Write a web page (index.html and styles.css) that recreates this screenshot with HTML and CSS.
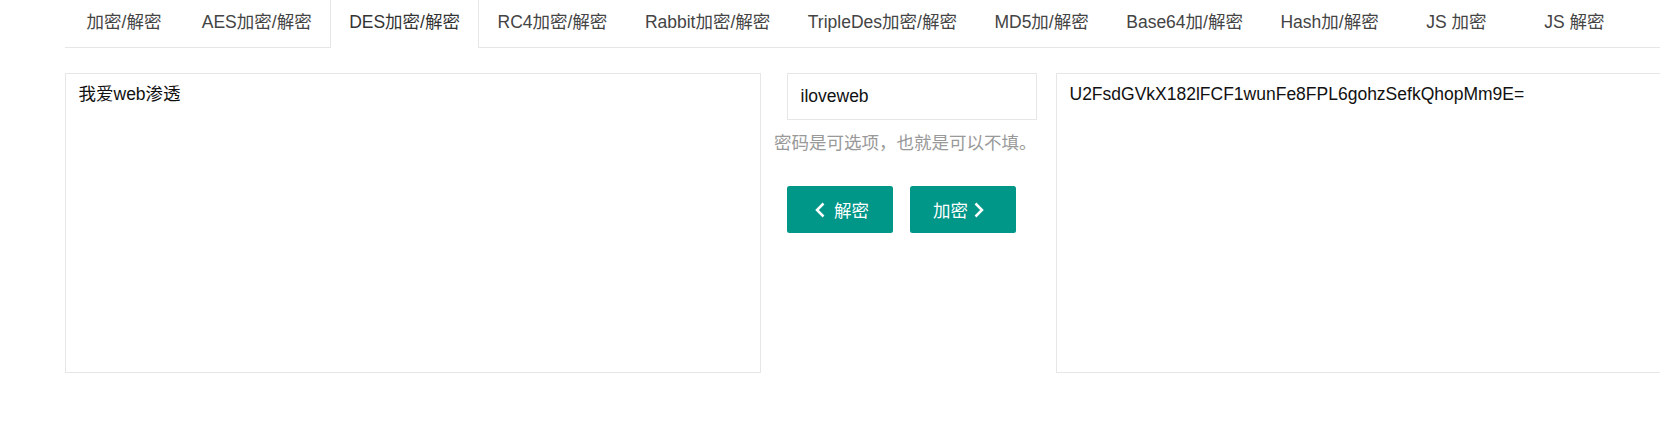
FILE: index.html
```html
<!DOCTYPE html>
<html lang="zh-CN">
<head>
<meta charset="utf-8">
<title>DES加密/解密</title>
<link rel="stylesheet" href="styles.css">
</head>
<body>
<div class="page">
  <ul class="tabs">
    <li class="tab">加密/解密</li>
    <li class="tab">AES加密/解密</li>
    <li class="tab active">DES加密/解密</li>
    <li class="tab">RC4加密/解密</li>
    <li class="tab">Rabbit加密/解密</li>
    <li class="tab">TripleDes加密/解密</li>
    <li class="tab">MD5加/解密</li>
    <li class="tab">Base64加/解密</li>
    <li class="tab">Hash加/解密</li>
    <li class="tab">JS 加密</li>
    <li class="tab">JS 解密</li>
  </ul>
  <div class="work">
    <textarea class="box">我爱web渗透</textarea>
    <div class="middle">
      <input class="pwd" type="text" value="iloveweb">
      <div class="hint">密码是可选项，也就是可以不填。</div>
      <div class="actions">
        <button class="btn btn-dec" type="button"><svg class="chev" width="10" height="16" viewBox="0 0 10 16"><polyline points="8.5,1.5 2,8 8.5,14.5" fill="none" stroke="#fff" stroke-width="2.5" stroke-linecap="butt" stroke-linejoin="miter"/></svg><span>解密</span></button>
        <button class="btn btn-enc" type="button"><span>加密</span><svg class="chev" width="10" height="16" viewBox="0 0 10 16"><polyline points="1.5,1.5 8,8 1.5,14.5" fill="none" stroke="#fff" stroke-width="2.5" stroke-linecap="butt" stroke-linejoin="miter"/></svg></button>
      </div>
    </div>
    <textarea class="box out">U2FsdGVkX182lFCF1wunFe8FPL6gohzSefkQhopMm9E=</textarea>
  </div>
</div>
</body>
</html>
```

FILE: styles.css
```css
html, body {
  margin: 0;
  padding: 0;
  background: #fff;
}
body {
  font-family: "Liberation Sans", "Noto Sans CJK SC", sans-serif;
  font-size: 17.5px;
  color: #333;
  overflow: hidden;
  width: 1660px;
  height: 423px;
}
.page {
  padding-left: 65px;
}
.tabs {
  list-style: none;
  margin: 0;
  padding: 0;
  height: 47px;
  display: flex;
  gap: 0;
  border-bottom: 1px solid #e6e6e6;
  white-space: nowrap;
}
.tab {
  position: relative;
  padding: 0 18.75px;
  min-width: 118px;
  box-sizing: border-box;
  text-align: center;
  line-height: 44px;
  color: #444;
}
.tab.active {
  color: #333;
  border-left: 1px solid #e6e6e6;
  border-right: 1px solid #e6e6e6;
  background: #fff;
  height: 48px;
  padding: 0 17.75px;
}
.work {
  display: flex;
  margin-top: 25px;
}
.box {
  flex: 0 0 auto;
  width: 696px;
  height: 300px;
  box-sizing: border-box;
  border: 1px solid #e6e6e6;
  border-radius: 0;
  padding: 7.5px 12.5px;
  margin: 0;
  font: inherit;
  line-height: 25px;
  color: #111;
  resize: none;
  outline: none;
  overflow: hidden;
}
.middle {
  flex: 0 0 295px;
  width: 295px;
  display: flex;
  flex-direction: column;
}
.pwd {
  margin: 0 0 0 26px;
  width: 250px;
  height: 47px;
  box-sizing: border-box;
  border: 1px solid #e6e6e6;
  border-radius: 0;
  padding: 0 12.5px;
  font: inherit;
  color: #111;
  outline: none;
}
.hint {
  margin: 11px 0 0 13px;
  line-height: 25px;
  color: #999;
  white-space: nowrap;
}
.actions {
  display: flex;
  gap: 17px;
  margin: 30px 0 0 26px;
}
.btn {
  width: 106px;
  height: 47px;
  border: 0;
  border-radius: 2.5px;
  background: #009688;
  color: #fff;
  font: inherit;
  display: flex;
  align-items: center;
  justify-content: flex-start;
  padding: 0;
  cursor: pointer;
}
.btn-dec {
  padding-left: 28px;
  gap: 9px;
}
.btn-enc {
  padding-left: 23px;
  gap: 6px;
}
.chev {
  display: block;
}
```
